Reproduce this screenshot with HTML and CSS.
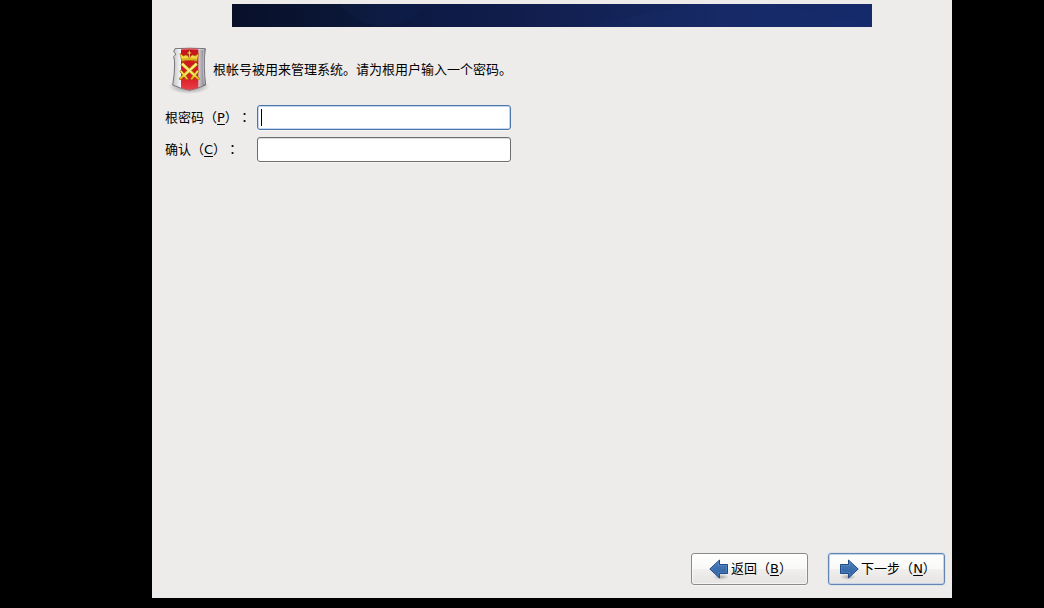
FILE: index.html
```html
<!DOCTYPE html>
<html lang="zh-CN">
<head>
<meta charset="utf-8">
<title>根密码</title>
<link rel="stylesheet" href="styles.css">
</head>
<body>
<main class="installer">
  <div class="banner">
    <svg class="banner-art" viewBox="0 0 640 23" preserveAspectRatio="none" aria-hidden="true">
      <circle cx="151" cy="-31" r="53" fill="#1c3f8c" opacity=".08"/>
      <path d="M350 23 Q420 8 465 0 H545 L640 23Z" fill="#204090" opacity=".08"/>
    </svg>
  </div>
  <form class="form">
    <div class="content">
      <div class="intro">
        <svg class="shield" viewBox="0 0 126 156" aria-hidden="true">
          <defs>
            <linearGradient id="silver" x1="0" y1="0" x2="1" y2="0">
              <stop offset="0" stop-color="#c2c0c4"/><stop offset=".25" stop-color="#f8f8f9"/>
              <stop offset=".75" stop-color="#dddbe0"/><stop offset=".88" stop-color="#a9a6af"/><stop offset="1" stop-color="#77737e"/>
            </linearGradient>
            <linearGradient id="red" x1="0" y1="0" x2="0" y2="1">
              <stop offset="0" stop-color="#c8141c"/><stop offset=".7" stop-color="#dc1c25"/><stop offset="1" stop-color="#e8404a"/>
            </linearGradient>
            <linearGradient id="gold" x1="0" y1="0" x2="0" y2="1">
              <stop offset="0" stop-color="#fff06a"/><stop offset="1" stop-color="#e3bd1c"/>
            </linearGradient>
            <radialGradient id="shade"><stop offset="0" stop-opacity=".45"/><stop offset="1" stop-opacity="0"/></radialGradient>
          </defs>
          <ellipse cx="63" cy="128" rx="62" ry="22" fill="url(#shade)"/>
          <path d="M21 14 Q65 11 112 14 Q108 42 109 70 Q110 100 113 123 Q90 134 64 139 Q38 134 14 123 Q20 91 20 60 Q20 48 17 38 L24 30 L17 24Z" fill="url(#silver)" stroke="#77757a" stroke-width="3" stroke-linejoin="round"/>
          <path d="M39 14 Q64 12 91 14 V131 Q75 136 64 138 Q53 136 39 131Z" fill="url(#red)"/>
          <path d="M25 17 Q65 13 108 17 Q105 48 106 72 Q107 100 109 120" fill="none" stroke="#fff" stroke-width="2" stroke-opacity=".65"/>
          <path d="M36 28 L46 36 L54 33 L64 38 L74 33 L82 36 L92 28 L87 52 Q64 46 41 52Z" fill="url(#gold)" stroke="#a26b05" stroke-width="2" stroke-linejoin="round"/>
          <path d="M42 47 Q64 41 86 47" fill="none" stroke="#c48b0d" stroke-width="2"/>
          <path d="M64 18 V40 M56 27 H72" stroke="#a01616" stroke-width="7"/>
          <path d="M64 20 V39 M58 27 H70" stroke="#ffe13c" stroke-width="3"/>
          <g fill="none" stroke="#946a05" stroke-width="11">
            <path d="M41 58 L82 96 M87 58 L46 96"/>
            <path d="M89 82 L71 104 M39 82 L57 104 M78 92 L91 104 M50 92 L37 104" stroke-width="8" stroke-linecap="round"/>
          </g>
          <g fill="none" stroke="url(#gold)" stroke-width="8">
            <path d="M42 59 L82 96 M86 59 L46 96"/>
            <path d="M89 82 L71 104 M39 82 L57 104 M78 92 L91 104 M50 92 L37 104" stroke-width="5" stroke-linecap="round"/>
          </g>
          <path d="M43 60 L78 93 M85 60 L50 93" stroke="#fffab5" stroke-width="3"/>
        </svg>
        <p class="message">根帐号被用来管理系统。请为根用户输入一个密码。</p>
      </div>
      <div class="fields">
        <label for="password">根密码（<u>P</u>）<span class="colon" lang="zh-Hant">：</span></label>
        <input class="entry entry-active" id="password" type="password" accesskey="p">
        <label for="confirm">确认（<u>C</u>）<span class="colon" lang="zh-Hant">：</span></label>
        <input class="entry" id="confirm" type="password" accesskey="c">
      </div>
    </div>
    <div class="actions">
      <button class="button" type="button" accesskey="b">
        <svg class="arrow" viewBox="0 0 20 24" aria-hidden="true">
          <defs><linearGradient id="blue" x1="0" y1="0" x2="0" y2="1"><stop offset="0" stop-color="#4d7fbb"/><stop offset="1" stop-color="#2b5f9f"/></linearGradient></defs>
          <ellipse cx="12" cy="20" rx="8" ry="3" fill="url(#shade)" opacity=".6"/>
          <path d="M.8 12 L10.500 3 V7.500 H18.500 V16.500 H10.500 V21Z" fill="url(#blue)" stroke="#204a87"/>
          <path d="M2.300 12 L9.500 5.300 V8.500 H17.500 V15.500 H9.500 V18.700Z" fill="none" stroke="#75a1d5" stroke-opacity=".3"/>
        </svg>
        <span>返回（<u>B</u>）</span>
      </button>
      <button class="button button-default" type="submit" accesskey="n">
        <svg class="arrow" viewBox="0 0 20 24" aria-hidden="true">
          <ellipse cx="9" cy="20" rx="8" ry="3" fill="url(#shade)" opacity=".6"/>
          <path d="M19.200 12 L9.500 3 V7.500 H1.500 V16.500 H9.500 V21Z" fill="url(#blue)" stroke="#204a87"/>
          <path d="M17.700 12 L10.500 5.300 V8.500 H2.500 V15.500 H10.500 V18.700Z" fill="none" stroke="#75a1d5" stroke-opacity=".3"/>
        </svg>
        <span>下一步（<u>N</u>）</span>
      </button>
    </div>
  </form>
</main>
</body>
</html>
```
FILE: styles.css
```css
* { box-sizing: border-box; }
body {
  margin: 0;
  min-height: 100vh;
  padding: 0 92px 10px 152px;
  display: flex;
  background: #000;
  color: #000;
  font: 13px/20px "DejaVu Sans", "Noto Sans CJK SC", sans-serif;
  text-spacing-trim: space-all;
}
.installer {
  flex: 1;
  display: flex;
  flex-direction: column;
  padding-top: 4px;
  background: #edeceb;
}
.banner {
  height: 23px;
  margin: 0 80px;
  background: linear-gradient(90deg, #081029, #0b1737 18%, #0e1b47 35%, #121f50 50%, #14255b 65%, #162863 76%, #152a6b);
}
.banner-art { display: block; width: 100%; height: 100%; }
.form {
  flex: 1;
  display: flex;
  flex-direction: column;
  justify-content: space-between;
}
.content { padding: 17px 13px 0; }
.intro { display: flex; align-items: center; }
.shield { width: 42px; height: 52px; margin-left: 3px; flex: none; }
.message { margin: 0 0 0 3px; }
.fields {
  display: grid;
  grid-template-columns: 92px minmax(0, 254px);
  align-items: center;
  row-gap: 7px;
  padding-top: 9px;
}
.colon { font-family: "Noto Sans CJK TC", sans-serif; }
u { text-underline-offset: 2px; }
.entry {
  width: 100%;
  height: 25px;
  padding: 0 4px;
  border: 1px solid #6e6d6b;
  border-radius: 3px;
  outline: 0;
  background: #fff;
  box-shadow: inset 0 1px #ddd, 0 1px #f7f6f5;
  font: inherit;
}
.entry-active {
  border-color: #4b74a8;
  background: linear-gradient(#000, #000) 3px center / 1px 17px no-repeat #fff;
  box-shadow: inset 0 0 0 1px #c5d8ef, 0 1px #f7f6f5;
}
.entry-active:focus { background: #fff; }
.actions {
  display: flex;
  justify-content: flex-end;
  gap: 20px;
  padding: 0 7px 13px;
}
.button {
  width: 117px;
  height: 32px;
  padding: 0 0 0 2px;
  display: flex;
  align-items: center;
  justify-content: center;
  gap: 2px;
  border: 1px solid #8b8a88;
  border-radius: 3px;
  background: linear-gradient(#fff, #f8f8f7 50%, #f0efee 52%, #e5e4e2);
  box-shadow: inset 0 0 0 1px #fff9, 0 1px #f7f6f5;
  color: #000;
  font: inherit;
  white-space: nowrap;
}
.button-default {
  border-color: #6385b0;
  box-shadow: inset 0 0 0 1px #c4d5e9, 0 0 0 1px #dce3eb;
}
.arrow { width: 20px; height: 24px; flex: none; }
```
